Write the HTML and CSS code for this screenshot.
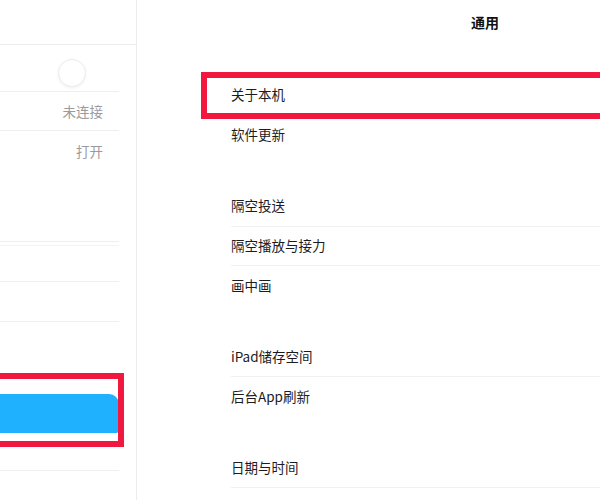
FILE: index.html
```html
<!DOCTYPE html>
<html lang="zh">
<head>
<meta charset="utf-8">
<link rel="stylesheet" href="styles.css">
</head>
<body>
<div class="screen">
  <aside class="sidebar">
    <div class="side-top"></div>
    <div class="side-group g1">
      <div class="side-row"><span class="knob"></span></div>
      <div class="side-row"><span class="value">未连接</span></div>
      <div class="side-row last"><span class="value">打开</span></div>
    </div>
    <div class="side-group g2">
      <div class="side-row h36"></div>
      <div class="side-row h36 double"></div>
      <div class="side-row h40"></div>
      <div class="side-row h40 last"></div>
    </div>
    <div class="side-group g3">
      <div class="side-row selected"></div>
      <div class="side-row plain"></div>
    </div>
    <div class="annot annot-left"></div>
  </aside>
  <main class="main">
    <header class="title">通用</header>
    <section class="group first">
      <div class="row">关于本机</div>
      <div class="row">软件更新</div>
    </section>
    <section class="group">
      <div class="row">隔空投送</div>
      <div class="row">隔空播放与接力</div>
      <div class="row">画中画</div>
    </section>
    <section class="group">
      <div class="row">iPad储存空间</div>
      <div class="row">后台App刷新</div>
    </section>
    <section class="group">
      <div class="row">日期与时间</div>
      <div class="row">键盘</div>
    </section>
    <div class="annot annot-right"></div>
  </main>
</div>
</body>
</html>
```

FILE: styles.css
```css
html, body {
  margin: 0;
  padding: 0;
  background: #ffffff;
}

body {
  font-family: "Noto Sans CJK SC", "Noto Sans", sans-serif;
  font-size: 13.5px;
  color: #1c1c1e;
}

.screen {
  width: 600px;
  height: 500px;
  overflow: hidden;
  display: flex;
  position: relative;
}

.sidebar {
  width: 136px;
  flex: none;
  border-right: 1px solid #ececee;
  box-shadow: 4px 0 3px -3px #f4f4f6;
  background: #ffffff;
  position: relative;
  display: flex;
  flex-direction: column;
}

.side-top {
  height: 44px;
  border-bottom: 1px solid #ececee;
}

.side-group {
  width: 119px;
  display: flex;
  flex-direction: column;
}

.side-group.g1 { margin-top: 8px; }
.side-group.g2 { margin-top: 33px; }
.side-group.g3 { margin-top: 32px; }

.side-row {
  height: 39px;
  box-sizing: border-box;
  border-bottom: 1px solid #efeff1;
  display: flex;
  align-items: center;
  justify-content: flex-end;
  padding-right: 16px;
  position: relative;
}

.side-row.last { border-bottom: none; }
.side-row.h36 { height: 39px; }
.side-row.h40 { height: 40px; }
.side-row.double {
  height: 37px;
  margin-top: 3px;
  border-top: 1px solid #f4f4f6;
}

.side-row.selected {
  height: 39px;
  background: #1fb1fd;
  border-bottom: none;
  border-radius: 0 10px 3px 0;
}

.side-row.plain { height: 38px; }

.value {
  color: #9a9a9f;
  font-size: 13.5px;
}

.knob {
  position: absolute;
  left: 58px;
  top: 6px;
  width: 26px;
  height: 26px;
  border-radius: 50%;
  background: #ffffff;
  border: 1px solid #ececee;
  box-shadow: 0 1px 3px rgba(0, 0, 0, 0.06);
}

.main {
  flex: 1;
  position: relative;
  background: #ffffff;
}

.title {
  height: 44px;
  display: flex;
  align-items: center;
  padding-left: 334px;
  font-weight: 700;
  font-size: 14px;
  color: #111111;
}

.group {
  margin-top: 32px;
  display: flex;
  flex-direction: column;
}

.group.first { margin-top: 32px; }

.row {
  margin-left: 94px;
  height: 39.5px;
  box-sizing: border-box;
  border-bottom: 1px solid #f1f1f3;
  display: flex;
  align-items: center;
  padding-bottom: 2px;
  white-space: nowrap;
}

.row:last-child { border-bottom: none; }

.annot {
  position: absolute;
  border: 6px solid #f0183f;
  box-sizing: border-box;
}

.annot-left {
  left: -10px;
  top: 373px;
  width: 134px;
  height: 74px;
}

.annot-right {
  left: 64px;
  top: 72px;
  width: 460px;
  height: 47px;
}
```
